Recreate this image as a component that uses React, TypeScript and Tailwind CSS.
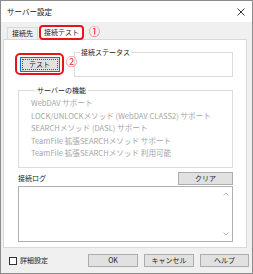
import React from "react";

function CloseIcon() {
  return (
    <svg width="8" height="8" viewBox="0 0 8 8" className="block">
      <path d="M0.5 0.5 L7.5 7.5 M7.5 0.5 L0.5 7.5" stroke="#333" strokeWidth="1" />
    </svg>
  );
}

function Chevron({ up }: { up?: boolean }) {
  return (
    <svg width="6" height="4" viewBox="0 0 6 4" className="block">
      <path d={up ? "M0.5 3.5 L3 1 L5.5 3.5" : "M0.5 0.5 L3 3 L5.5 0.5"} stroke="#b8b8b8" strokeWidth="1" fill="none" />
    </svg>
  );
}

function WinButton({ label, className = "" }: { label: string; className?: string }) {
  return (
    <div
      className={`h-[13px] bg-[#e1e1e1] border border-[#adadad] flex items-center justify-center text-[7px] leading-none text-[#222] ${className}`}
    >
      {label}
    </div>
  );
}

export default function App() {
  const features = [
    "WebDAV サポート",
    "LOCK/UNLOCKメソッド (WebDAV CLASS2) サポート",
    "SEARCHメソッド (DASL) サポート",
    "TeamFile 拡張SEARCHメソッド サポート",
    "TeamFile 拡張SEARCHメソッド 利用可能",
  ];
  return (
    <div className="w-[253px] h-[274px] bg-[#f0f0f0] border border-[#8c8c8c] flex flex-col font-['Noto_Sans_CJK_JP',sans-serif] text-[7px] text-[#222] overflow-hidden">
      {/* title bar */}
      <div className="h-[21px] bg-white flex items-center justify-between pl-[6px] pr-[7px] shrink-0">
        <span className="text-[7.5px] leading-none text-[#111]">サーバー設定</span>
        <CloseIcon />
      </div>

      <div className="flex flex-col px-[2px]">
        {/* tabs */}
        <div className="h-[17px] flex items-end relative">
          <div className="ml-[4px] h-[12px] w-[31px] border border-b-0 border-[#d9d9d9] bg-[#f0f0f0] flex items-center justify-center leading-none">
            接続先
          </div>
          <div className="ml-[1px] h-[15px] w-[45px] border-2 border-[#e8141c] rounded-[4px] bg-white flex items-center justify-center leading-none mb-[-1px] relative z-10">
            接続テスト
          </div>
          <div className="ml-[5px] mb-[2px] text-[11px] leading-none text-[#e8141c] self-end">①</div>
        </div>

        {/* panel */}
        <div className="w-[244px] h-[209px] border border-[#d9d9d9] bg-white pl-[14px] pr-[13px] flex flex-col">
          {/* row 1 */}
          <div className="flex items-start mt-[8px] -ml-[3px] relative">
            <div className="mt-[5px] w-[49px] h-[22px] border-2 border-[#e8141c] rounded-[5px] flex items-center justify-center">
              <div className="w-[40px] h-[15px] bg-[#e1e1e1] border border-[#0078d7] p-[1px]">
                <div className="w-full h-full border border-dotted border-[#555] flex items-center justify-center leading-none">
                  テスト
                </div>
              </div>
            </div>
            <span className="absolute left-[51px] top-[8px] text-[11px] leading-none text-[#e8141c] z-10">②</span>
            <fieldset className="ml-[10px] flex-1 h-[29px] border border-[#dcdcdc] px-[2px] m-0 p-0 min-w-0">
              <legend className="ml-[3px] px-[1px] leading-[8px]">接続ステータス</legend>
            </fieldset>
          </div>

          {/* server features */}
          <fieldset className="mt-[9px] h-[82px] border border-[#dcdcdc] pl-[12px] pt-[3px] m-0 min-w-0">
            <legend className="ml-[4px] px-[2px] leading-[8px]">サーバーの機能</legend>
            {features.map((f) => (
              <div key={f} className="text-[7.6px] leading-[12.6px] text-[#a6a6a6] whitespace-nowrap">
                {f}
              </div>
            ))}
          </fieldset>

          {/* log */}
          <div className="mt-[5px] h-[11px] flex items-center justify-between">
            <span className="leading-none">接続ログ</span>
            <WinButton label="クリア" className="w-[55px] h-[11px]" />
          </div>
          <div className="mt-[2px] h-[56px] border border-[#b0b0b0] flex">
            <div className="flex-1" />
            <div className="w-[12px] flex flex-col items-center justify-between py-[5px]">
              <Chevron up />
              <Chevron />
            </div>
          </div>
        </div>

        {/* bottom row */}
        <div className="mt-[6px] flex items-center pr-[1px]">
          <div className="ml-[6px] w-[8px] h-[8px] border border-[#333] bg-white" />
          <span className="ml-[3px] leading-none">詳細設定</span>
          <div className="ml-auto flex gap-[6px]">
            <WinButton label="OK" className="w-[50px]" />
            <WinButton label="キャンセル" className="w-[50px]" />
            <WinButton label="ヘルプ" className="w-[49px]" />
          </div>
        </div>
      </div>
    </div>
  );
}
